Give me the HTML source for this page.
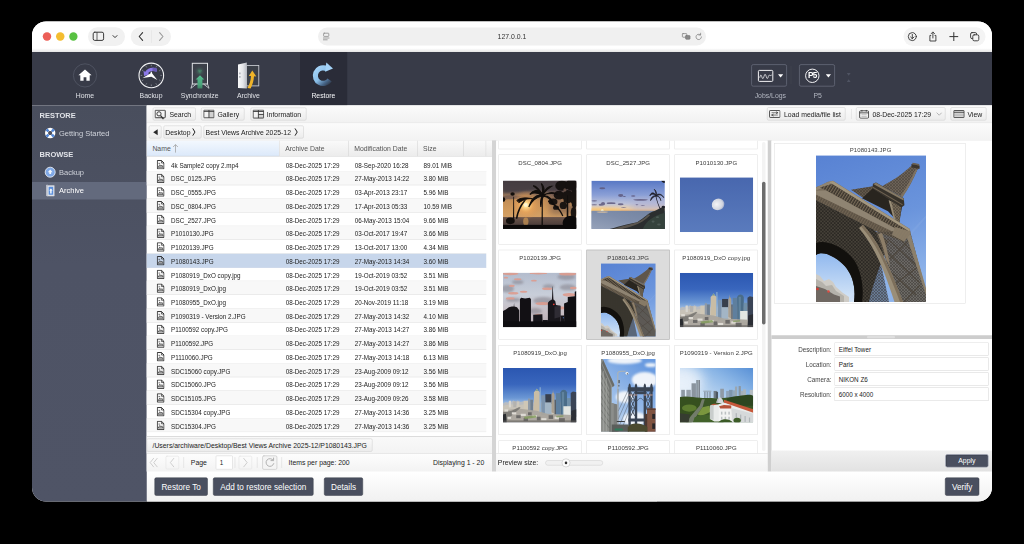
<!DOCTYPE html>
<html><head><meta charset="utf-8"><title>P5 Restore</title>
<style>
*{box-sizing:border-box;margin:0;padding:0}
html,body{width:1024px;height:544px;background:#000;overflow:hidden}
body{font-family:"Liberation Sans",sans-serif;position:relative;color:#222;-webkit-font-smoothing:antialiased}
#sc{position:absolute;left:0;top:0;width:4096px;height:2176px;transform:scale(.25);transform-origin:0 0}
#win{position:absolute;left:0;top:0;width:1024px;height:544px;zoom:4;clip-path:inset(21.5px 32px 42.5px 32px round 14px);background:#fff}
.a{position:absolute}
.t{position:absolute;white-space:nowrap;line-height:1}
#titlebar{left:32px;top:21px;width:960px;height:31px;background:linear-gradient(#fff 0,#fff 88%,#e4e4e4 100%)}
.pill{position:absolute;background:#f1f1f1;border-radius:10px}
#tb{left:32px;top:52px;width:960px;height:53.4px;background:#383b48}
#tbsel{left:300px;top:52px;width:47.3px;height:53.4px;background:#2a2c38}
.tl{position:absolute;white-space:nowrap;font-size:6.87px;line-height:8px;color:#e4e6ea;transform:translateX(-50%);top:91.6px}
#side{left:32px;top:105.4px;width:114.8px;height:400px;background:linear-gradient(#494e5d,#4e5365 40%,#4f5466)}
.sh{position:absolute;left:39.6px;font-weight:bold;font-size:7.5px;color:#e1e3e8;line-height:9px;white-space:nowrap}
.si{position:absolute;left:59px;font-size:7.5px;color:#cfd2da;line-height:9px;white-space:nowrap}
#sidesel{left:32px;top:181.9px;width:114.8px;height:17.6px;background:#636a7d}
#main{left:146.8px;top:105.4px;width:845.2px;height:366.2px;background:#fff}
#bar1{left:146.8px;top:105.4px;width:845.2px;height:17.8px;background:linear-gradient(#fbfbfb,#f1f1f1);border-bottom:.6px solid #d4d4d4}
#bar2{left:146.8px;top:123.2px;width:845.2px;height:17.3px;background:linear-gradient(#fbfbfb,#f3f3f3);border-bottom:.6px solid #d0d0d0}
.btn{position:absolute;height:13.2px;border:.7px solid #cdcdcd;border-radius:1.6px;background:linear-gradient(#fafafa,#ececec);font-size:6.87px;line-height:13px;color:#222;white-space:nowrap}
.btn span{position:absolute;top:0}
.dbtn{position:absolute;background:#4a4f5f;border-radius:1.7px;color:#fff;font-size:8.2px;text-align:center;white-space:nowrap;border:.6px solid #3c404d}
#ghead{left:146.8px;top:140.5px;width:345.2px;height:16px;background:linear-gradient(#fafafa,#ececec);border-bottom:.6px solid #d0d0d0}
.gh{position:absolute;top:140.5px;height:15.8px;border-right:.6px solid #d0d0d0;font-size:6.87px;line-height:16px;color:#555;padding-left:5.6px;white-space:nowrap}
.row{position:absolute;left:146.8px;width:339.5px;height:13.8px;border-bottom:.7px solid #dfdfdf;font-size:6.3px;line-height:15.600px;color:#222;white-space:nowrap}
.row.alt{background:#f8f8f8}
.row.sel{background:#c7d6eb;border-bottom-color:#b9c9e0}
.row span{position:absolute;top:0}
.row svg{position:absolute;left:10px;top:2.300px}
.splitv{position:absolute;background:#d3d3d3}
.thumb{position:absolute;width:83.2px;height:89.9px;border:.6px solid #dedede;background:#fff}
.thumb.sel{background:#dcdcdc;border-color:#a8a8a8}
.gl{position:absolute;white-space:nowrap;font-size:6px;letter-spacing:.08px;line-height:8px;color:#383838;transform:translateX(-50%)}
.fl{position:absolute;font-size:6.3px;line-height:8px;color:#444;white-space:nowrap;text-align:right;width:60px;left:771.4px}
.fi{position:absolute;left:834.4px;width:154.4px;height:13.3px;border:.6px solid #d4d4d4;background:#fff;font-size:6.3px;line-height:13.2px;padding-left:3.800px;color:#222;white-space:nowrap}
</style></head>
<body>

<svg width="0" height="0" style="position:absolute">
<defs>
<linearGradient id="gEs" x1="0" y1="0" x2=".25" y2="1"><stop offset="0" stop-color="#5882d3"/><stop offset=".55" stop-color="#6a94dc"/><stop offset="1" stop-color="#8fb4ea"/></linearGradient>
<linearGradient id="gEa" x1="0" y1="0" x2="0" y2="1"><stop offset="0" stop-color="#8db6ee"/><stop offset="1" stop-color="#d9e8f8"/></linearGradient>
<pattern id="lat" width="3" height="3" patternUnits="userSpaceOnUse"><path d="M0 0L3 3M3 0L0 3" stroke="#2a241d" stroke-width=".55" opacity=".65"/></pattern>
<pattern id="teeth" width="2.600" height="8" patternUnits="userSpaceOnUse" patternTransform="rotate(32)"><rect width="1.200" height="8" fill="#8c7d67" opacity=".75"/></pattern>
<pattern id="latd" width="3.400" height="3.400" patternUnits="userSpaceOnUse"><path d="M0 0L3.400 3.400M3.400 0L0 3.400" stroke="#5a5348" stroke-width=".6" opacity=".8"/></pattern>
<pattern id="lat2" width="2.2" height="2.2" patternUnits="userSpaceOnUse"><path d="M0 0L2.2 2.2M2.2 0L0 2.2" stroke="#0f0e0d" stroke-width=".5" opacity=".6"/></pattern>
<linearGradient id="gS1" x1="0" y1="0" x2="0" y2="1"><stop offset="0" stop-color="#423c42"/><stop offset=".2" stop-color="#6b5a56"/><stop offset=".42" stop-color="#c48f57"/><stop offset=".6" stop-color="#d09a5c"/><stop offset=".755" stop-color="#d3a066"/><stop offset=".765" stop-color="#6a544a"/><stop offset="1" stop-color="#3d3232"/></linearGradient>
<radialGradient id="gSun" cx=".5" cy=".5" r=".5"><stop offset="0" stop-color="#fff3c0"/><stop offset=".18" stop-color="#ffd98a"/><stop offset=".5" stop-color="#f0a85a" stop-opacity=".6"/><stop offset="1" stop-color="#d89050" stop-opacity="0"/></radialGradient>
<linearGradient id="gS2" x1="0" y1="0" x2="0" y2="1"><stop offset="0" stop-color="#5777c4"/><stop offset=".3" stop-color="#8a9fd6"/><stop offset=".48" stop-color="#bec3d9"/><stop offset=".57" stop-color="#e8cfae"/><stop offset=".62" stop-color="#efb97a"/><stop offset=".63" stop-color="#7f8fae"/></linearGradient>
<linearGradient id="gSea" x1="1" y1="0" x2="0" y2="1"><stop offset="0" stop-color="#72829f"/><stop offset=".5" stop-color="#7e8daa"/><stop offset="1" stop-color="#96a2b9"/></linearGradient>
<linearGradient id="gM" x1="0" y1="0" x2="0" y2="1"><stop offset="0" stop-color="#4867ae"/><stop offset="1" stop-color="#5a7bbd"/></linearGradient>
<radialGradient id="gMoon" cx=".4" cy=".45" r=".65"><stop offset="0" stop-color="#f4f4f6"/><stop offset=".7" stop-color="#d2d6e0"/><stop offset="1" stop-color="#8c9cc4"/></radialGradient>
<linearGradient id="gD" x1="0" y1="0" x2="0" y2="1"><stop offset="0" stop-color="#b3bccd"/><stop offset=".4" stop-color="#c8ced9"/><stop offset=".75" stop-color="#c6bcc2"/><stop offset="1" stop-color="#b5a9b0"/></linearGradient>
<filter id="bl1" x="-20%" y="-20%" width="140%" height="140%"><feGaussianBlur stdDeviation="1.1"/></filter>
<filter id="bl3" x="-30%" y="-30%" width="160%" height="160%"><feGaussianBlur stdDeviation="4"/></filter>
<filter id="bl4" x="-50%" y="-50%" width="200%" height="200%"><feGaussianBlur stdDeviation="8"/></filter>
<filter id="bl2" x="-20%" y="-20%" width="140%" height="140%"><feGaussianBlur stdDeviation=".6"/></filter>
<linearGradient id="gN" x1="0" y1="0" x2="0" y2="1"><stop offset="0" stop-color="#2b57b1"/><stop offset=".3" stop-color="#3966bd"/><stop offset=".55" stop-color="#6b97d4"/><stop offset=".66" stop-color="#a3c0e4"/></linearGradient>
<linearGradient id="gB" x1="0" y1="1" x2=".6" y2="0"><stop offset="0" stop-color="#cfe0f4"/><stop offset=".45" stop-color="#9fc0ea"/><stop offset="1" stop-color="#6a9be0"/></linearGradient>
<linearGradient id="gG" x1=".2" y1="1" x2="1" y2="0"><stop offset="0" stop-color="#e4eef8"/><stop offset=".35" stop-color="#c3daf2"/><stop offset=".7" stop-color="#8bb6e6"/><stop offset="1" stop-color="#5890d6"/></linearGradient>

<symbol id="pEiffel" viewBox="0 0 110 147" preserveAspectRatio="none">
<rect width="110" height="147" fill="url(#gEs)"/>
<path d="M0 96H46V147H0Z" fill="url(#gEa)"/>
<path d="M70 96L110 118V147H56Z" fill="#8fb5ea" opacity=".55"/>
<path d="M30 147L110 60V63L35 147Z" fill="#a9c8f0" opacity=".12"/>
<!-- spire -->
<path d="M96.400 9.600L97 8L103 9.200L103.500 13L101.300 14.600C96.500 26 91.500 34.500 86.500 42L66 31C78 25 89 17 96.400 9.600Z" fill="#6f655a"/>
<path d="M96.400 9.600L97 8L103 9.200L103.500 13L101.300 14.600C96.500 26 91.500 34.500 86.500 42L66 31C78 25 89 17 96.400 9.600Z" fill="url(#lat)"/>
<path d="M101.300 14.600C96.500 26 91.500 34.500 86.500 42L84.500 41C90 33 95 24 99.600 14Z" fill="#877b69" opacity=".8"/>
<path d="M95.400 8.800L103.600 10.400L103.400 13.600L95.800 12.200Z" fill="#3b352e"/>
<path d="M96.600 7.600L103.200 8.800L103.400 10.200L96.200 9Z" fill="#6c6154"/>
<!-- left lattice by 2nd platform -->
<path d="M35 34.500L57 31L57 34.500L47 42.500Z" fill="#63594c"/><path d="M35 34.500L57 31L57 34.500L47 42.500Z" fill="url(#lat)"/>
<!-- underside of 2nd platform -->
<path d="M46 43L57 33L86 52L83 68L72 56Z" fill="#29251f"/>
<path d="M73 45L85.500 50.500L83.500 68L79.500 65Z" fill="#786c5a"/><path d="M73 45L85.500 50.500L83.500 68L79.500 65Z" fill="url(#lat)"/>
<path d="M72.600 45L75 46L79.600 65L77.600 63.600Z" fill="#988c76"/>
<!-- 2nd platform -->
<path d="M57 28.600L60 27.400L87.800 43.200L88.400 50L85.400 52.400L56.400 33.400Z" fill="#37322b"/>
<path d="M57.200 28.800L60 27.600L87.800 43.400L87.600 45.400Z" fill="#857966"/>
<path d="M56.600 31.400L86.600 49L86.400 50.200L56.500 32.600Z" fill="#7a6d5a" opacity=".8"/>
<!-- 1st platform -->
<path d="M0 32L6 29.500L12 26.500L17 25.600L94 74L94.400 79L88 86.500L57 75L0 45Z" fill="#7b6f5e"/>
<path d="M12 26.800L17 25.800L94 74.200L93.400 76.400L16 28.600Z" fill="#a3977f"/>
<path d="M0 32.200L12 26.800L16 28.600L0 35.400Z" fill="#908573"/>
<path d="M4 32.200L16 28.800L93.300 76.600L92 80.200L10 35Z" fill="#39332b"/>
<path d="M4 32.200L16 28.800L93.300 76.600L92 80.200L10 35Z" fill="url(#teeth)"/>
<path d="M0 35.600L10 35.200L92 80.400L90.400 83.200L0 39.600Z" fill="#8f8472"/>
<path d="M0 39.600L90.400 83.300L88 86.500L57 75L0 45.500Z" fill="#5a5043"/><path d="M0 39.600L90.400 83.300L88 86.500L57 75L0 45.500Z" fill="url(#teeth)" opacity=".6"/>
<!-- dark under platform -->
<path d="M0 45L57 74.500L72 86L68 100C62 115 57 130 53 147L38 147C40.500 130 36 109 11 99C6 97.600 2 98.400 0 100Z" fill="#2b2823"/>
<path d="M0 45L57 74.500L72 86L68 100C62 115 57 130 53 147L38 147C40.500 130 36 109 11 99C6 97.600 2 98.400 0 100Z" fill="url(#latd)"/>
<path d="M0 88C10 84 30 92 40 108C46 120 48 135 46 147L38 147C40.500 130 36 109 11 99C6 97.600 2 98.400 0 100Z" fill="#12100d"/>
<path d="M53 147L64 104L73 147Z" fill="#3b362f" opacity=".45"/><path d="M53 147L64 104L73 147Z" fill="url(#lat)"/>
<!-- right leg lattice -->
<path d="M60 77L94 76L110 136V147H84L68 100Z" fill="#675d50" opacity=".86"/>
<path d="M60 77L94 76L110 136V147H84L68 100Z" fill="url(#lat)"/>
<path d="M72 84L100 110M70 96L104 128M80 80L96 96M76 118L100 140M88 147L104 130M74 104L92 86M80 128L102 112" stroke="#4a4238" stroke-width="1.200" opacity=".8" fill="none"/>
<path d="M90 79.500L94 77.500L110 133V140Z" fill="#8c806c"/>
<path d="M79 72L94 76.200L94.400 79L88 86.500L76 80Z" fill="#857966"/>
<path d="M79 72L94 76.200L94.400 79L88 86.500L76 80Z" fill="url(#teeth)" opacity=".7"/>
<!-- lit beams -->
<path d="M47 70C60 84 69 100 87 147L78.500 147C67 112 59 93 43 73Z" fill="#9a8e78"/>
<path d="M47 70C60 84 69 100 87 147L84 147C67 102 58 86 45 71.500Z" fill="#7d6f5b"/>
<path d="M66 78C72 95 73 105 74 112L70 104C68 95 65 86 62 79Z" fill="#8d7e68"/>
<!-- buildings -->
<path d="M0 119L4 121L8 126L13 124L17 127L20 132L27 138L33 142V147H0Z" fill="#cfccc6"/>
<path d="M0 124L6 127L10 131L16 130L20 136L28 141V147H0Z" fill="#a9a6a0" opacity=".7"/>
<path d="M0 131L9 134L18 139.500L24 141.500V147H0Z" fill="#6f6862"/>
<circle cx="1.500" cy="134" r="1.300" fill="#d23a30"/><circle cx="12.500" cy="136.500" r="1.200" fill="#e04a40"/>
</symbol>

<symbol id="pPalms" viewBox="0 0 100 66" preserveAspectRatio="none">
<rect width="100" height="66" fill="url(#gS1)"/>
<rect x="64" y="-6" width="46" height="52" fill="#5c4a4c" opacity=".5" filter="url(#bl3)"/>
<path d="M0 0H100V13C84 10 70 17 52 14C34 11 16 19 0 16Z" fill="#443c42" opacity=".9" filter="url(#bl1)"/>
<path d="M0 21C12 18 24 23 40 21L38 25C26 27 12 23 0 27Z" fill="#5e4e50" opacity=".55" filter="url(#bl2)"/>
<circle cx="31" cy="33.300" r="20" fill="url(#gSun)"/><circle cx="31" cy="33.300" r="2.600" fill="#fff6d0" filter="url(#bl2)"/>
<ellipse cx="31" cy="56" rx="3.600" ry="5.500" fill="#e0a458" opacity=".6" filter="url(#bl2)"/>
<rect y="60.500" width="100" height="5.500" fill="#0c0a0a"/>
<g fill="#130f0d" stroke="#130f0d" stroke-linecap="round">
<!-- main palm -->
<path d="M52.300 62L52.800 18L54 18L54.200 62Z" stroke="none"/>
<path d="M53.300 18C47 11 41 13 36.500 19C42 15.500 48 17 53 20C46 19 39 24 35 36C40 27 47 22 53.300 21.500C51 26 50.500 31 51.500 36C52 30 53 25 54.500 22C60 20 66 23 69 33C65 25 60 22 55 21C61 16 68 15 74 19C67 16.500 61 17.500 55 19.500C57 13 56 8 52 4C54.500 9 54 14 53.300 18Z" stroke-width="1.600"/>
<path d="M53 19C49 11 45 8 41 7C46 10 50 14 53 19Z" stroke-width="1.600"/>
<path d="M54 19C58 11 62 8 66 8C61 11 57 15 54 19Z" stroke-width="1.600"/>
<!-- leaning tree -->
<path d="M17.500 52C19 42 23 33 30 26L31 26.800C25 34 21 43 19.500 52Z" stroke="none"/>
<path d="M19 27C24 23 32 23 40 25C34 24 28 26 22 30Z" stroke-width="1.200"/>
<!-- far-left tree -->
<path d="M13.600 52L14 22L15 22L15.200 52Z" stroke="none"/>
<ellipse cx="13" cy="18.500" rx="3" ry="2.400" stroke="none"/><ellipse cx="1" cy="26" rx="2" ry="3" stroke="none"/>
<ellipse cx="10" cy="55" rx="6" ry="4.500" stroke="none"/>
<!-- right trees -->
<path d="M86.300 62L87 20L88.400 20L89 62Z" stroke="none"/>
<path d="M62 27C70 31 78 38 82 48L80.500 48.600C76 39 69 33 61 29Z" stroke="none"/>
</g>
<g fill="#120e0d" opacity=".93"><ellipse cx="80" cy="7" rx="9" ry="7"/><ellipse cx="93" cy="6" rx="8" ry="8"/><ellipse cx="76" cy="20" rx="7" ry="6"/><ellipse cx="88" cy="22" rx="8" ry="9"/><ellipse cx="97" cy="24" rx="5" ry="14"/><ellipse cx="68" cy="29" rx="6" ry="4.500"/><ellipse cx="82" cy="34" rx="5" ry="5"/><ellipse cx="96" cy="44" rx="4" ry="8"/><ellipse cx="72" cy="37" rx="4" ry="3"/></g>
<ellipse cx="92" cy="58" rx="11" ry="10" fill="#0c0a0a"/>
<ellipse cx="84" cy="13" rx="2" ry="2.500" fill="#7a5e50" opacity=".7"/><ellipse cx="92" cy="33" rx="1.600" ry="2.500" fill="#b98a58" opacity=".7"/><ellipse cx="81" cy="27" rx="1.500" ry="2" fill="#a87c54" opacity=".7"/>
</symbol>

<symbol id="pBeach" viewBox="0 0 100 66" preserveAspectRatio="none">
<rect width="100" height="66" fill="url(#gS2)"/>
<rect x="55" y="26" width="50" height="16" fill="#aeaed2" opacity=".55" filter="url(#bl3)"/>
<ellipse cx="15" cy="41" rx="26" ry="4" fill="#f8c878" opacity=".8" filter="url(#bl1)"/>
<circle cx="15" cy="41" r="1.800" fill="#fff6cc"/>
<rect y="41.300" width="100" height="24.700" fill="url(#gSea)"/>
<ellipse cx="15" cy="43" rx="8" ry="1.200" fill="#e8c8a0" opacity=".6"/>
<g fill="#5f5a7e" opacity=".85" filter="url(#bl2)"><ellipse cx="15.0" cy="10.6" rx="4.0" ry="1.3"/><ellipse cx="40.0" cy="20.5" rx="3.5" ry="2.0"/><ellipse cx="57.0" cy="21.1" rx="3.0" ry="1.0"/><ellipse cx="67.0" cy="26.4" rx="10.0" ry="1.1"/><ellipse cx="4.0" cy="27.7" rx="4.0" ry="0.9"/><ellipse cx="4.0" cy="33.0" rx="4.0" ry="0.7"/><ellipse cx="16.0" cy="31.7" rx="2.8" ry="2.3"/><ellipse cx="27.0" cy="31.0" rx="6.0" ry="1.2"/><ellipse cx="40.0" cy="32.3" rx="4.0" ry="1.3"/><ellipse cx="44.0" cy="36.6" rx="4.0" ry="0.6"/><ellipse cx="62.0" cy="33.0" rx="2.0" ry="0.6"/><ellipse cx="70.0" cy="34.3" rx="3.0" ry="0.6"/><ellipse cx="45.0" cy="21.8" rx="2.0" ry="0.7"/><ellipse cx="13.0" cy="33.0" rx="3.0" ry="1.3"/></g>
<path d="M25 66C40 62 55 58 62.500 56.800C70 52 76 47 78 45.500C82 43 86 41.500 87.500 41C92 38 96 36 100 35V66Z" fill="#2b2e2f"/>
<path d="M30 66C44 62 56 59 63 57C70 53 75 49 78 46L80 47.500C74 54 66 59 56 62C50 64 46 65 42 66Z" fill="#5f5a52" opacity=".9"/>
<path d="M70 66C74 56 84 48 100 44V66Z" fill="#35423c"/>
<g fill="#5d6a66" opacity=".6"><ellipse cx="84" cy="56" rx="2" ry="1.500"/><ellipse cx="92" cy="60" rx="2.500" ry="1.500"/><ellipse cx="90" cy="50" rx="2" ry="1.200"/></g>
<g fill="#23232e" stroke="#23232e" stroke-linecap="round"><path d="M93.600 40C91 34 88.500 28 87.200 20.500L88.200 20.300C89.600 28 92 34 94.800 39.600Z" stroke="none"/>
<path d="M87.600 19.500C84 15 81 16.500 79.500 21C82 18 85 18 87.500 20.500C83.500 20.500 81 23.500 80.500 27.500C83 23.500 85.500 21.500 88 21.500C91.500 21 94 23.500 94.500 27.500C94 23.500 92 21 89 20.300C93 18.500 96.500 20 98.500 23.500C96.500 19 92.500 17.500 88.600 19.300C89 16 87.500 13 85.500 12C87.500 14.500 88 17 87.600 19.500Z" stroke-width=".9"/></g>
<path d="M95 0H100V3.500C97.500 3.500 95.800 2 95 0Z" fill="#1b1b20"/>
<ellipse cx="98" cy="36" rx="2.400" ry="1.600" fill="#20222a"/>
</symbol>

<symbol id="pMoon" viewBox="0 0 120 90" preserveAspectRatio="none">
<rect width="120" height="90" fill="url(#gM)"/>
<ellipse cx="62.5" cy="44.5" rx="10.5" ry="9.4" fill="url(#gMoon)" transform="rotate(-20 62.5 44.5)"/>
</symbol>

<symbol id="pDusk" viewBox="0 0 100 74" preserveAspectRatio="none">
<rect width="100" height="74" fill="url(#gD)"/>
<g fill="#87858f" opacity=".6" filter="url(#bl1)"><ellipse cx="6" cy="22" rx="9" ry="5"/><ellipse cx="20" cy="13" rx="8" ry="3"/><ellipse cx="62" cy="19" rx="8" ry="3"/><ellipse cx="88" cy="20" rx="11" ry="4"/><ellipse cx="86" cy="6" rx="12" ry="4"/><ellipse cx="55" cy="38" rx="14" ry="5"/><ellipse cx="14" cy="37" rx="10" ry="3"/><ellipse cx="44" cy="52" rx="9" ry="4"/></g>
<g fill="#dd9c8e" opacity=".9" filter="url(#bl2)"><ellipse cx="10" cy="1.600" rx="11" ry="2"/><ellipse cx="48" cy="1.200" rx="12" ry="1.400"/><ellipse cx="88" cy="2" rx="12" ry="2.200"/><ellipse cx="20" cy="9" rx="5" ry="1.400"/><ellipse cx="12" cy="18" rx="4" ry="1.600"/><ellipse cx="14" cy="28" rx="7" ry="1.800"/><ellipse cx="28" cy="26" rx="5" ry="1.400"/><ellipse cx="60" cy="22" rx="7" ry="1.800"/><ellipse cx="90" cy="30" rx="9" ry="2.400"/><ellipse cx="96" cy="21" rx="5" ry="1.600"/><ellipse cx="10" cy="35" rx="6" ry="1.600"/><ellipse cx="54" cy="42" rx="10" ry="2"/><ellipse cx="48" cy="58" rx="5" ry="2.400"/><ellipse cx="42" cy="11" rx="4" ry="1.200"/><ellipse cx="4" cy="7" rx="3" ry="1.200"/><ellipse cx="80" cy="48" rx="4" ry="2"/></g>
<path d="M0 52L4 50L8 47L12 46L14.600 46L15 41L15.400 46L19 47L22 51V74H0Z" fill="#131115"/>
<path d="M23 36L24.500 34L30 35L36.500 34L38 36V74H23Z" fill="#121014"/>
<path d="M41 57L53.500 56.500L54 74H41Z" fill="#17151a"/>
<path d="M61 74V41L63 38.500L66.500 36.500L67.300 19L67.700 19L68.500 36.500L71 38.500L72 44L78 45V74Z" fill="#18161b"/>
<path d="M70 46L78 45V60L70 62Z" fill="#2f2c34"/>
<path d="M54 64H61V74H54ZM78 58H83V74H78Z" fill="#16141a"/>
<path d="M83 42L88 40V33L97.500 32V26L100 25V74H83Z" fill="#100f12"/>
<rect y="66" width="100" height="8" fill="#0e0d10"/>
<circle cx="69" cy="43" r="1.200" fill="#e23a34"/><circle cx="82" cy="61" r=".7" fill="#5a8fe0"/>
</symbol>

<symbol id="pNYC" viewBox="0 0 100 74" preserveAspectRatio="none">
<rect width="100" height="74" fill="url(#gN)"/>
<path d="M0 48L4 46L6 47L9 45L11 46L14 44L17 46L20 44L24 46L28 45L30 47L34 44L38 46L42 47L100 46V74H0Z" fill="#b9bcc0"/>
<path d="M0 51L10 49L20 50L30 49L42 51L46 56L100 56V74H0Z" fill="#c8c3b8"/>
<rect x="8.0" y="44.4" width="3.0" height="8.9" fill="#d8d6d0"/>
<rect x="14.0" y="45.1" width="4.0" height="8.1" fill="#b4b2ae"/>
<rect x="19.0" y="45.9" width="3.0" height="8.9" fill="#cdc8bc"/>
<rect x="28.0" y="44.4" width="6.0" height="16.3" fill="#cfc7b6"/>
<rect x="34.0" y="41.4" width="3.0" height="17.8" fill="#8f9aa6"/>
<rect x="37.0" y="42.9" width="4.0" height="17.8" fill="#6f7f90"/>
<path d="M42 58V33L44 31L45.800 28.200L46.200 28.200L48 31L50 33V58Z" fill="#c9bda5"/>
<path d="M44 31L46 28.400L48 31Z" fill="#6f9a88"/>
<path d="M49.800 26H51.200L51.600 60H49.600Z" fill="#8fb0d2"/>
<rect x="52.0" y="37.0" width="5.0" height="26.6" fill="#7d94ad"/>
<rect x="57.5" y="35.5" width="8.5" height="13.3" fill="#383f4c"/>
<rect x="57.0" y="46.6" width="9.0" height="18.5" fill="#a3b5c5"/>
<path d="M66 60V36L67.600 33L68 29L68.400 33L70 36V62Z" fill="#a99f90"/>
<rect x="70.0" y="42.9" width="2.0" height="20.7" fill="#5a6068"/>
<rect x="72.0" y="34.0" width="6.0" height="29.6" fill="#5f7f9e"/>
<path d="M78 64V33C80 28.500 85 28.500 87 33V64Z" fill="#4a6c88"/>
<rect x="80.0" y="32.6" width="3.0" height="31.1" fill="#6f93ae" opacity=".6"/>
<rect x="87.0" y="40.7" width="5.0" height="22.9" fill="#6f8fa8"/>
<path d="M92 66V34L95 32L100 33V66Z" fill="#3a4456"/>
<rect x="82.0" y="51.8" width="10.0" height="14.8" fill="#e2e6e2"/>
<path d="M0 58L20 55L46 58L60 62L100 64V74H0Z" fill="#a9a59c" opacity=".92"/>
<path d="M0 60L12 58L22 53L24 54L10 66L4 72H0Z" fill="#6f6d6a" opacity=".75"/>
<g fill="#dedbd4"><rect x="2" y="56" width="5" height="3"/><rect x="12" y="60" width="6" height="3"/><rect x="24" y="62" width="7" height="3"/><rect x="40" y="64" width="6" height="3"/><rect x="6" y="66" width="5" height="3"/><rect x="52" y="68" width="7" height="3"/><rect x="70" y="66" width="6" height="3"/></g>
<g fill="#6c6a68"><rect x="18" y="64" width="6" height="4"/><rect x="34" y="60" width="5" height="4"/><rect x="46" y="66" width="5" height="5"/><rect x="62" y="64" width="6" height="5"/><rect x="76" y="68" width="8" height="5"/><rect x="28" y="68" width="6" height="4"/></g>
<path d="M28 66L44 64L46 67L30 69Z" fill="#7f9a58" opacity=".8"/><path d="M72 65L82 64L82 66L73 67Z" fill="#7f9a58" opacity=".7"/>
<path d="M0 63L4 62L5 74H0Z" fill="#2a2c30"/><path d="M93 58L100 56V74H92Z" fill="#2b2e35"/>
<rect y="71" width="100" height="3" fill="#5f5e5c" opacity=".6"/>
</symbol>

<symbol id="pBridge" viewBox="0 0 55 73" preserveAspectRatio="none">
<rect width="55" height="73" fill="url(#gB)"/>
<g fill="#f6f8fb" opacity=".95" filter="url(#bl1)"><ellipse cx="24" cy="1.500" rx="17" ry="3.600"/><ellipse cx="44" cy="21" rx="13" ry="8"/><ellipse cx="24" cy="38" rx="9" ry="6"/><ellipse cx="34" cy="60" rx="12" ry="7"/><ellipse cx="50" cy="6" rx="6" ry="2"/></g>
<!-- left building -->
<path d="M0 0H2L12.600 24.500V27.500L11 28.500V73H0Z" fill="#8d8f8b"/>
<path d="M0 3L10 27V73H8.500V29L0 9Z" fill="#70726f"/>
<path d="M2.400 1L13.800 26.300L12 28L1.200 4Z" fill="#6a6c69"/>
<g stroke="#5f615f" stroke-width=".7" opacity=".7"><path d="M0 16L8.500 33M0 23L8.500 39M0 30L8.500 45M0 37L8.500 51M0 44L8.500 57M0 51L8.500 63M0 58L8.500 69"/></g>
<g stroke="#b3b5b0" stroke-width=".6" opacity=".8"><path d="M2.800 12V73M5.600 19V73"/></g>
<path d="M10.500 44L17 45.500V73H10.500Z" fill="#7c7e7c"/><path d="M10.500 44L13 44.600V73H10.500Z" fill="#8c8e8b"/>
<!-- cables -->
<g stroke="#56606c" stroke-width=".5" fill="none"><path d="M28.500 29L17.500 52M28.500 35L17.500 60M28.500 43L18 68M28.500 51L21 70"/></g>
<!-- bridge tower -->
<g fill="#394352"><path d="M27.600 67V27L28.200 25L28.800 24.500L29.400 25L30 27V67ZM34 67V27L34.600 25L35.200 24.500L35.800 25L36.400 27V67ZM42.800 67V27L43.400 25L44 24.500L44.600 25L45.200 27V67ZM49.400 67V27L50 25L50.600 24.500L51.200 25L51.800 27V67Z"/>
<path d="M27 28.400H52.400V32.600H27ZM27.600 59.500H51.800V62.500H27.600Z"/><path d="M36 32.600H43.200V35C41 35.500 38.200 35.500 36 35Z"/></g>
<path d="M27.600 36H36.400M42.800 36H51.800" stroke="#c09a90" stroke-width="1"/>
<g stroke="#3f4958" stroke-width=".9" fill="none"><path d="M30 33L34 41L30 49L34 57M34 33L30 41L34 49L30 57M45.200 33L49.400 41L45.200 49L49.400 57M49.400 33L45.200 41L49.400 49L45.200 57"/><path d="M30 41H34M30 49H34M45.200 41H49.400M45.200 49H49.400"/></g>
<path d="M36.400 42C38.500 38.500 40.700 38.500 42.800 42" stroke="#465060" stroke-width=".7" fill="none"/>
<!-- lamp post -->
<path d="M17 73V14.500C17 12.800 18.500 12.300 20.500 12.300H24.800" stroke="#aeb2b2" stroke-width="1.100" fill="none"/>
<path d="M17.400 73V30" stroke="#7e8282" stroke-width=".5"/>
<circle cx="26.200" cy="14.200" r="1.500" fill="#e8eaea"/><circle cx="26.600" cy="14.800" r=".6" fill="#444"/>
<rect x="17.600" y="21" width="1.400" height="3.200" fill="#5a5e60"/><rect x="17.600" y="26" width="1" height="1.600" fill="#5a5e60"/>
<!-- brick building -->
<path d="M46.200 49.600H55V73H46.200Z" fill="#7f5341"/><path d="M46.200 49.600H55V51H46.200Z" fill="#5f3e32"/>
<path d="M44 55H46.400V73H44Z" fill="#4c3830"/>
<rect x="51.400" y="55" width="2.800" height="5" fill="#2a2729"/><rect x="51.400" y="64.500" width="2.800" height="5.500" fill="#2a2729"/>
<!-- bottom -->
<path d="M11 65.500H28V73H11Z" fill="#5b5e5b"/>
<path d="M27 68C30 63.500 40 63.500 46.500 68V73H27Z" fill="#4b4a2f"/>
<rect x="14" y="69.600" width="8" height="2" fill="#2f7a5a"/>
<path d="M16 62H24V63H16Z" fill="#3a3d40"/>
</symbol>

<symbol id="pSing" viewBox="0 0 100 75" preserveAspectRatio="none">
<rect width="100" height="75" fill="url(#gG)"/>
<ellipse cx="2" cy="18" rx="30" ry="22" fill="#f4f8fc" opacity=".75" filter="url(#bl4)"/>
<rect x="2.0" y="30.0" width="5.0" height="12.0" fill="#8e99a4"/>
<rect x="9.0" y="30.0" width="6.0" height="12.0" fill="#95a0aa"/>
<rect x="16.0" y="21.0" width="6.0" height="21.0" fill="#8a949e"/>
<rect x="22.5" y="16.5" width="5.0" height="25.5" fill="#7b8690"/>
<rect x="24.0" y="16.5" width="2.2" height="25.5" fill="#a8b2ba" opacity=".7"/>
<rect x="33.0" y="32.2" width="2.2" height="9.0" fill="#8d9db0"/>
<rect x="36.5" y="32.2" width="2.2" height="9.0" fill="#8d9db0"/>
<rect x="40.0" y="32.2" width="2.2" height="9.0" fill="#8d9db0"/>
<rect x="32.0" y="31.1" width="11.0" height="1.5" fill="#9aa8b8"/>
<rect x="46.0" y="31.5" width="5.0" height="10.5" fill="#6f7a84"/>
<rect x="49.0" y="33.0" width="3.0" height="9.0" fill="#4c5660"/>
<rect x="55.0" y="28.5" width="5.0" height="13.5" fill="#8f9aa6"/>
<rect x="63.0" y="31.5" width="4.0" height="10.5" fill="#8fa3b8"/>
<rect x="67.0" y="30.0" width="5.0" height="12.0" fill="#7f95ac"/>
<rect x="72.0" y="30.7" width="3.0" height="11.3" fill="#93a7ba"/>
<rect x="75.0" y="25.5" width="3.0" height="16.5" fill="#9aa6b0"/>
<rect x="80.0" y="24.8" width="3.0" height="17.3" fill="#8a96a2"/>
<rect x="83.0" y="31.5" width="3.0" height="10.5" fill="#a3b0bc"/>
<rect x="86.0" y="29.2" width="4.0" height="12.8" fill="#aab4bc"/>
<rect x="95.0" y="30.0" width="5.0" height="12.0" fill="#b4bcc2"/>
<path d="M0 40C8 38 18 40 28 41C36 42 44 40 52 42C62 40 70 41 78 39C86 37 94 38 100 40V75H0Z" fill="#3a5526"/>
<path d="M64 42C72 38 82 39 90 37C94 36 98 37 100 38V52H66Z" fill="#2d4620"/>
<path d="M0 41C10 39 22 41 31 43L27 56L16 75H0Z" fill="#36501f"/>
<ellipse cx="13" cy="55" rx="10" ry="5" fill="#5d7c30"/>
<path d="M30 43L34 43L31 54L24 64L18 75H8L20 60L27 52Z" fill="#727c6a"/>
<path d="M31 54L40 52L42 60L30 66L24 64Z" fill="#7a963e"/>
<path d="M0 62L14 64L12 75H0Z" fill="#363c30"/>
<path d="M20 68C30 62 44 64 52 70L60 75H18Z" fill="#42622a"/>
<path d="M41 52L46 50L52 50L60 47L100 58V75H72L70 73.500H47L41 70Z" fill="#e9ebea"/>
<path d="M41 52L46 50V71L41 70Z" fill="#c9cdcc"/>
<path d="M50 48C50 42.500 53 40.500 54.500 40.500C56 40.500 59 42.500 59.500 48Z" fill="#d5d9dc"/><path d="M50 48C50 44 52 41.500 54 40.800C52.500 43 52 45.500 52.400 48Z" fill="#b4b9be"/>
<path d="M60 43.500L100 56.500V61.500L60 47.500Z" fill="#c6583a"/>
<path d="M42 49.800L47 49L52 49.500L46 51Z" fill="#b9563a"/>
<rect x="53.0" y="54.0" width="17.0" height="19.5" fill="#f2f3f2"/>
<path d="M53.500 52.500L60 50.800L70 51.500L70 55.500L55 55.500Z" fill="#b5533a"/>
<path d="M70 55L100 63V75H72Z" fill="#d6d9da"/>
<g fill="#8f979c" opacity=".55"><rect x="56" y="60" width="2" height="4"/><rect x="61" y="60" width="2" height="4"/><rect x="66" y="60" width="2" height="4"/><rect x="56" y="67" width="2" height="4"/><rect x="61" y="67" width="2" height="4"/><rect x="66" y="67" width="2" height="4"/><rect x="76" y="62" width="1.600" height="9"/><rect x="82" y="64" width="1.600" height="9"/><rect x="88" y="66" width="1.600" height="8"/><rect x="94" y="68" width="1.600" height="7"/></g>
<path d="M54 73C60 69 68 70 72 75H52Z" fill="#3b5a26"/><ellipse cx="78" cy="72" rx="5" ry="3.500" fill="#3d5c28"/>
</symbol>
</defs></svg>

<div id="sc"><div id="win">
<div id=titlebar class="a" style=""></div>
<div class="a" style="left:42.8px;top:32.3px;width:8.4px;height:8.4px;border-radius:50%;background:#ec5f57"></div>
<div class="a" style="left:56.0px;top:32.3px;width:8.4px;height:8.4px;border-radius:50%;background:#f4bd30"></div>
<div class="a" style="left:69.2px;top:32.3px;width:8.4px;height:8.4px;border-radius:50%;background:#58c142"></div>
<div class="pill" style="left:88px;top:27.3px;width:37px;height:18.6px"></div>
<div class="pill" style="left:130.8px;top:27.3px;width:40.2px;height:18.6px"></div>
<div class="pill" style="left:318px;top:27.5px;width:388px;height:18px;background:#f0f0f0"></div>
<div class="pill" style="left:903.4px;top:27.3px;width:82px;height:18.6px;background:#f4f4f4"></div>
<svg class="a" style="left:32px;top:21px" width="960" height="31" viewBox="32 21 960 31" fill="none" stroke="#444" stroke-width="1" stroke-linecap="round" stroke-linejoin="round">
<rect x="93.2" y="32.2" width="10.4" height="8.2" rx="1.6" stroke="#3a3a3a" stroke-width="1"/><path d="M97 32.4V40.2" stroke="#3a3a3a" stroke-width=".8"/>
<path d="M113 35.6l2 2 2-2" stroke="#333" stroke-width="1"/>
<path d="M142.6 32.6l-3.4 3.9 3.4 3.9" stroke="#333" stroke-width="1.1"/>
<path d="M159.6 32.6l3.4 3.9-3.4 3.9" stroke="#9a9a9a" stroke-width="1.1"/>
<path d="M151.5 30.5v12" stroke="#e2e2e2" stroke-width=".6"/>
<g stroke="#8a8a8a" stroke-width=".8"><rect x="323.600" y="33.200" width="5.200" height="3.200" rx=".6"/><path d="M323.400 38h5.600M323.400 39.800h3.800"/></g>
<g stroke="#7a7a7a" stroke-width=".7"><rect x="682.4" y="33.6" width="4.4" height="3.6" rx=".6"/><rect x="685.6" y="35.6" width="4.4" height="3.6" rx=".6" fill="#8a8a8a"/></g>
<path d="M701.4 36.9a2.7 2.7 0 1 1-1-2.1M700.6 33.2v1.8h-1.8" stroke="#7a7a7a" stroke-width=".7"/>
<circle cx="912.3" cy="36.6" r="4" stroke="#333" stroke-width=".9"/><path d="M912.3 34.4v4.2M910.6 37l1.7 1.7 1.7-1.7" stroke="#333" stroke-width=".9"/>
<path d="M930.8 35.4h-.9v5.6h6v-5.6h-.9M932.9 33.2v4.8M931.3 33.6l1.6-1.7 1.6 1.7" stroke="#333" stroke-width=".9"/>
<path d="M949.8 36.6h8M953.8 32.6v8" stroke="#333" stroke-width="1"/>
<rect x="970.6" y="32.6" width="6" height="6" rx="1.4" stroke="#333" stroke-width=".9"/><rect x="972.8" y="34.8" width="6" height="6" rx="1.4" stroke="#333" stroke-width=".9" fill="#f4f4f4"/>
</svg>
<div class="t" style="left:512px;top:33.6px;font-size:6.9px;color:#333;transform:translateX(-50%);">127.0.0.1</div>
<div id=tb class="a" style=""></div>
<div id=tbsel class="a" style=""></div>
<svg class="a" style="left:32px;top:52px" width="960" height="54" viewBox="32 52 960 54">
<defs>
<linearGradient id="gRes" x1="0" y1="0" x2="1" y2="1"><stop offset="0" stop-color="#9fd0f6"/><stop offset=".6" stop-color="#7fb6e6"/><stop offset="1" stop-color="#3c5e86"/></linearGradient>
<linearGradient id="gSy" x1="0" y1="0" x2="0" y2="1"><stop offset="0" stop-color="#2f3a3c"/><stop offset=".55" stop-color="#3f6a58"/><stop offset="1" stop-color="#4aa37a"/></linearGradient>
</defs>
<!-- home -->
<circle cx="85" cy="75.4" r="11.6" fill="none" stroke="#585c6a" stroke-width=".7"/>
<path d="M85 69.4l-6.6 5.8h1.9v5.6h3.3v-3.6h2.8v3.6h3.3v-5.6h1.9z" fill="#fff"/>
<!-- backup clock -->
<circle cx="151.300" cy="75.400" r="12.300" fill="#373a46" stroke="#f2f3f5" stroke-width="1.100"/>
<g stroke="#c9ccd4" stroke-width=".5"><path d="M151.300 64.800v1.500M151.300 84.500v1.500M140.700 75.400h1.500M160.400 75.400h1.500M146 66.200l.7 1.200M156.600 66.200l-.7 1.200M142.100 70.100l1.200.7M160.500 70.100l-1.200.7M142.100 80.700l1.200-.7M160.500 80.700l-1.200-.7M146 84.600l.7-1.200M156.600 84.600l-.7-1.200"/></g>
<path d="M144.100 76L143.500 70.900L145.300 71.700C147.600 68.200 152.200 66.500 157 68.700L156.600 71.800C152.800 70.300 149.700 71.100 148.100 73.300L149.400 74.300Z" fill="#8b79e6"/>
<path d="M157 68.700L156.600 71.800C155 71.200 153.600 71 152.400 71.100L152.600 67.500C154 67.500 155.600 68 157 68.700Z" fill="#6a5cb8"/>
<path d="M142.600 77.900L150.400 73.600L150.900 71.800L151.700 71.800L152.200 73.600L157.300 79.900L151.300 76.700Z" fill="#fff"/>
<!-- synchronize -->
<radialGradient id="gSyG" cx="199.600" cy="71.300" r="6" gradientUnits="userSpaceOnUse"><stop offset="0" stop-color="#4a8a6c" stop-opacity=".85"/><stop offset="1" stop-color="#3b3f49" stop-opacity="0"/></radialGradient>
<linearGradient id="gSyA" x1="0" y1="75" x2="0" y2="88.600" gradientUnits="userSpaceOnUse"><stop offset="0" stop-color="#56bd8e"/><stop offset=".7" stop-color="#4aa57c"/><stop offset="1" stop-color="#3f7f62"/></linearGradient>
<rect x="192.300" y="63.300" width="15.200" height="20.700" fill="#3b3f49" stroke="#e0e2e6" stroke-width="1"/>
<rect x="193" y="64" width="13.800" height="19.300" fill="url(#gSyG)"/>
<path d="M192.300 84L190.900 88.300L196.400 84M207.500 84L209 88.300L203.500 84" fill="none" stroke="#d8dade" stroke-width=".8" stroke-linejoin="round"/>
<path d="M200 75.200L204.300 79.400H202.400V88.500H197.500V79.400H195.600Z" fill="url(#gSyA)"/>
<path d="M198 70.400h4M198.600 71.700h2.800M199.200 72.900h1.600" stroke="#4a9a76" stroke-width=".5" opacity=".7"/>
<!-- archive -->
<linearGradient id="gDoor" x1="238" y1="0" x2="247" y2="0" gradientUnits="userSpaceOnUse"><stop offset="0" stop-color="#fafafb"/><stop offset=".55" stop-color="#e4e5e9"/><stop offset="1" stop-color="#b4b7c0"/></linearGradient>
<rect x="246.600" y="65.400" width="12.200" height="20.500" fill="#3c4049" stroke="#d4d6dc" stroke-width=".8"/>
<path d="M238 64.600L246.900 62.600V88.500L238 87.900Z" fill="url(#gDoor)"/>
<path d="M239.400 72.600l1-.1v1.800l-1 0zM239.400 76l1 0v1.800l-1-.1z" fill="#8c909c"/>
<path d="M252.300 70.500L256.300 76.500L254 76.300C253.800 80.600 252.600 84.800 250.600 88.500L247.400 88C249.600 84.400 250.800 80.400 251 76.100L248.800 75.900Z" fill="#f0b429"/>
<!-- restore -->
<linearGradient id="gRes2" x1="316" y1="66" x2="331.500" y2="84" gradientUnits="userSpaceOnUse"><stop offset="0" stop-color="#a8d6f9"/><stop offset=".5" stop-color="#8abfe9"/><stop offset=".78" stop-color="#476689"/><stop offset="1" stop-color="#2b2e3a"/></linearGradient>
<path d="M326 65.600A10.400 10.400 0 1 0 331.800 81.400L327.500 78.400A5.200 5.200 0 1 1 326 71.300Z" fill="url(#gRes2)"/>
<path d="M326.300 62.600L333 68.500L325.200 71.700Z" fill="#a4d3f8"/>
<!-- jobs/logs & p5 -->
<rect x="751.6" y="64.6" width="35" height="21.600" rx="1.600" fill="none" stroke="#666a78" stroke-width=".8"/>
<rect x="799.4" y="64.600" width="35.200" height="21.600" rx="1.600" fill="none" stroke="#666a78" stroke-width=".8"/>
<path d="M791 66v18" stroke="#444753" stroke-width=".6"/>
<rect x="758.400" y="70.400" width="14.400" height="11" rx="1" fill="none" stroke="#f2f2f4" stroke-width="1"/>
<path d="M759.800 77.400q1-4.600 2-.6t2.200-.4q1.100-4.400 2.200 0t2.200 0q.9-2.400 1.800-.8l1.200-.4" fill="none" stroke="#f2f2f4" stroke-width=".75" stroke-linejoin="round" stroke-linecap="round"/>
<path d="M778 74.200h5.200l-2.600 3.400z" fill="#fff"/>
<path d="M825.800 74.200h5.200l-2.600 3.400z" fill="#fff"/>
<circle cx="812.300" cy="75.800" r="6.700" fill="none" stroke="#f4f4f6" stroke-width="1"/>
<path d="M846.800 73h3.800l-1.900 2.800zM846.800 82h3.800l-1.900-2.800z" fill="#4f5362"/>
</svg>
<div class="t" style="left:812.3px;top:71.6px;font-size:8.2px;color:#fff;transform:translateX(-50%);font-weight:bold;letter-spacing:-.6px">P5</div>
<div class="tl" style="left:85px;color:#dfe1e6">Home</div>
<div class="tl" style="left:151px;color:#dfe1e6">Backup</div>
<div class="tl" style="left:199.7px;color:#dfe1e6">Synchronize</div>
<div class="tl" style="left:248.4px;color:#dfe1e6">Archive</div>
<div class="tl" style="left:323.4px;color:#f4f5f7">Restore</div>
<div class="tl" style="left:770.3px;color:#b2b6c0">Jobs/Logs</div>
<div class="tl" style="left:817.6px;color:#b2b6c0">P5</div>
<div id=side class="a" style=""></div>
<div id=sidesel class="a" style=""></div>
<div class="sh" style="top:110.6px">RESTORE</div>
<div class="sh" style="top:149.6px">BROWSE</div>
<div class="si" style="top:128.6px">Getting Started</div>
<div class="si" style="top:167.8px">Backup</div>
<div class="si" style="top:186.3px;color:#fff">Archive</div>
<svg class="a" style="left:40px;top:124px" width="24" height="76" viewBox="40 124 24 76">
<circle cx="50.200" cy="133" r="5.200" fill="#fff"/><circle cx="50.200" cy="133" r="2" fill="#4d5263"/>
<g stroke="#4f86d8" stroke-width="2.600"><path d="M46.500 129.300l2 2M53.900 129.300l-2 2M46.500 136.700l2-2M53.900 136.700l-2-2"/></g>
<circle cx="50.200" cy="133" r="1.900" fill="#4d5263"/>
<circle cx="50.200" cy="172.200" r="5" fill="#7fa8e6" stroke="#e8ecf4" stroke-width=".9"/><path d="M50.200 169.600l-2.400 2.600h1.500v1.800h1.800v-1.800h1.500z" fill="#fff" opacity=".9"/>
<path d="M46.800 185.600h7.400v10.400h-7.400z" fill="#e9ebef" stroke="#c6c9d2" stroke-width=".6"/><path d="M48.600 186.800h4.600v8h-4.600z" fill="#5b8fdc"/><path d="M50.900 188.400l1.700 2h-1v3h-1.400v-3h-1z" fill="#fff"/>
<path d="M46 185l1.600-.6v11.800l-1.600-.500z" fill="#b8bcc8"/>
</svg>
<div id=main class="a" style=""></div>
<div id=bar1 class="a" style=""></div>
<div id=bar2 class="a" style=""></div>
<div class="btn" style="left:152.7px;top:107.4px;width:43px"><svg class="a" style="left:1.400px;top:1.500px" width="11.800" height="10.600" viewBox="0 0 10 9" fill="none" stroke="#333" stroke-width=".8"><rect x=".5" y=".6" width="8.600" height="6.400" rx=".4"/><circle cx="3.800" cy="3.700" r="1.800"/><path d="M5.200 5.200l2.400 3" stroke-width="1.100"/></svg><span style="left:16.2px">Search</span></div>
<div class="btn" style="left:201.1px;top:107.4px;width:43.4px"><svg class="a" style="left:1.600px;top:1.700px" width="11.400" height="9.100" viewBox="0 0 10 8" fill="none" stroke="#333" stroke-width=".75"><rect x="5" y="1.700" width="4.500" height="5.600" fill="#d2d2d2" stroke="none"/><rect x=".5" y=".5" width="9" height="6.800" rx=".4"/><path d="M5 .5v6.800M.5 1.700h9" /></svg><span style="left:15.8px">Gallery</span></div>
<div class="btn" style="left:250.4px;top:107.4px;width:56px"><svg class="a" style="left:1.600px;top:1.700px" width="11.800" height="9.400" viewBox="0 0 10 8" fill="none" stroke="#333" stroke-width=".75"><rect x="5" y="4.200" width="4.500" height="3.100" fill="#d2d2d2" stroke="none"/><rect x=".5" y=".5" width="9" height="6.800" rx=".4"/><path d="M5 .5v6.800M.5 1.700h9M5 4.200h4.500"/></svg><span style="left:15.8px">Information</span></div>
<div class="btn" style="left:766.9px;top:107.3px;width:78.6px"><svg class="a" style="left:1.600px;top:2.200px" width="11.600" height="8.400" viewBox="0 0 11 8" fill="none" stroke="#333" stroke-width=".8"><rect x=".5" y=".5" width="10" height="6.600" rx=".6"/><path d="M2.400 2.600h6M2.400 4.800h6M6.600 1.600l2 1-2 1M4.400 3.800l-2 1 2 1" stroke-width=".6"/></svg><span style="left:16.6px">Load media/file list</span></div>
<div class="btn" style="left:856px;top:107.3px;width:89.4px"><svg class="a" style="left:2.600px;top:1.600px" width="10.400" height="9.400" viewBox="0 0 10 9" fill="none" stroke="#333" stroke-width=".8"><rect x=".6" y="1.200" width="8.600" height="7.200" rx="1"/><path d="M.6 3.200h8.600M2.800 .4v1.600M7 .4v1.600" /><path d="M2.400 5h5M2.400 6.800h5" stroke="#999" stroke-width=".5"/></svg><svg class="a" style="left:79.400px;top:4.300px" width="6.400" height="4.300" viewBox="0 0 6 4" fill="none" stroke="#adadad" stroke-width=".8"><path d="M.6.600l2.400 2.400 2.400-2.400"/></svg><span style="left:15.9px">08-Dec-2025 17:29</span></div>
<div class="btn" style="left:950.4px;top:107.3px;width:36.2px"><svg class="a" style="left:2.400px;top:2.200px" width="11.400" height="8.300" viewBox="0 0 11 8" fill="none" stroke="#333" stroke-width=".8"><rect x=".5" y=".5" width="10" height="6.800" rx=".4" fill="#e2e2e2"/><path d="M.5 2.200h10" stroke-width=".8"/><path d="M.5 4h10M.5 5.600h10" stroke="#888" stroke-width=".5"/></svg><span style="left:16.5px">View</span></div>
<div class="a" style="left:851.200px;top:109px;width:.6px;height:10px;background:#d8d8d8"></div>
<div class="btn" style="left:148.8px;top:125.4px;width:12.7px"><svg class="a" style="left:3.400px;top:3.100px" width="5.600" height="6.700" viewBox="0 0 5 6"><path d="M4.400.3v5.400L.4 3z" fill="#2a2a2a"/></svg><span style="left:0px"></span></div>
<div class="btn" style="left:163.4px;top:125.4px;width:38.2px"><svg class="a" style="left:27.800px;top:1.900px" width="5" height="8.600" viewBox="0 0 5 8" fill="none" stroke="#222" stroke-width="1"><path d="M1 .4l2.200 3.600L1 7.600"/></svg><span style="left:1.4px">Desktop</span></div>
<div class="btn" style="left:203.5px;top:125.4px;width:100.2px"><svg class="a" style="left:90px;top:1.900px" width="5" height="8.600" viewBox="0 0 5 8" fill="none" stroke="#222" stroke-width="1"><path d="M1 .4l2.200 3.600L1 7.600"/></svg><span style="left:1.6px">Best Views Archive 2025-12</span></div>
<div id=ghead class="a" style=""></div>
<div class="gh" style="left:146.8px;width:132.8px;background:linear-gradient(#f3f8fe,#dce9fa);border-bottom:.6px solid #c3d4ea;">Name<svg class="a" style="left:25.600px;top:3.600px" width="6" height="9" viewBox="0 0 6 9" fill="none" stroke="#999" stroke-width=".7"><path d="M3 .6v8M.6 3l2.400-2.400 2.400 2.400"/></svg></div>
<div class="gh" style="left:279.6px;width:69.0px;">Archive Date</div>
<div class="gh" style="left:348.6px;width:68.89999999999998px;">Modification Date</div>
<div class="gh" style="left:417.5px;width:46.10000000000002px;">Size</div>
<div class="gh" style="left:463.6px;width:22.69999999999999px;"></div>
<div class="row" style="top:157.60px"><svg width="7.800" height="9.400" viewBox="0 0 7.400 9" fill="none" stroke="#1e1e1e" stroke-width=".85" stroke-linejoin="round"><path d="M.5.500h4l2.400 2.400v5.600h-6.400z"/><path d="M4.500.500v2.400h2.400" stroke-width=".6"/><path d="M1.300 7l1.600-2.500 1.100 1.400.9-1 1.200 2.100z" stroke-width=".55" fill="#c4c4c4"/><path d="M1.600 3.200h1.600" stroke-width=".6"/></svg><span style="left:24.200px">4k Sample2 copy 2.mp4</span><span style="left:138.900px">08-Dec-2025 17:29</span><span style="left:207.900px">08-Sep-2020 16:28</span><span style="left:276.800px">89.01 MiB</span></div>
<div class="row alt" style="top:171.33px"><svg width="7.800" height="9.400" viewBox="0 0 7.400 9" fill="none" stroke="#1e1e1e" stroke-width=".85" stroke-linejoin="round"><path d="M.5.500h4l2.400 2.400v5.600h-6.400z"/><path d="M4.500.500v2.400h2.400" stroke-width=".6"/><path d="M1.300 7l1.600-2.500 1.100 1.400.9-1 1.200 2.100z" stroke-width=".55" fill="#c4c4c4"/><path d="M1.600 3.200h1.600" stroke-width=".6"/></svg><span style="left:24.200px">DSC_0125.JPG</span><span style="left:138.900px">08-Dec-2025 17:29</span><span style="left:207.900px">27-May-2013 14:22</span><span style="left:276.800px">3.80 MiB</span></div>
<div class="row" style="top:185.06px"><svg width="7.800" height="9.400" viewBox="0 0 7.400 9" fill="none" stroke="#1e1e1e" stroke-width=".85" stroke-linejoin="round"><path d="M.5.500h4l2.400 2.400v5.600h-6.400z"/><path d="M4.500.500v2.400h2.400" stroke-width=".6"/><path d="M1.300 7l1.600-2.500 1.100 1.400.9-1 1.200 2.100z" stroke-width=".55" fill="#c4c4c4"/><path d="M1.600 3.200h1.600" stroke-width=".6"/></svg><span style="left:24.200px">DSC_0555.JPG</span><span style="left:138.900px">08-Dec-2025 17:29</span><span style="left:207.900px">03-Apr-2013 23:17</span><span style="left:276.800px">5.96 MiB</span></div>
<div class="row alt" style="top:198.79px"><svg width="7.800" height="9.400" viewBox="0 0 7.400 9" fill="none" stroke="#1e1e1e" stroke-width=".85" stroke-linejoin="round"><path d="M.5.500h4l2.400 2.400v5.600h-6.400z"/><path d="M4.500.500v2.400h2.400" stroke-width=".6"/><path d="M1.300 7l1.600-2.500 1.100 1.400.9-1 1.200 2.100z" stroke-width=".55" fill="#c4c4c4"/><path d="M1.600 3.200h1.600" stroke-width=".6"/></svg><span style="left:24.200px">DSC_0804.JPG</span><span style="left:138.900px">08-Dec-2025 17:29</span><span style="left:207.900px">17-Apr-2013 05:33</span><span style="left:276.800px">10.59 MiB</span></div>
<div class="row" style="top:212.52px"><svg width="7.800" height="9.400" viewBox="0 0 7.400 9" fill="none" stroke="#1e1e1e" stroke-width=".85" stroke-linejoin="round"><path d="M.5.500h4l2.400 2.400v5.600h-6.400z"/><path d="M4.500.500v2.400h2.400" stroke-width=".6"/><path d="M1.300 7l1.600-2.500 1.100 1.400.9-1 1.200 2.100z" stroke-width=".55" fill="#c4c4c4"/><path d="M1.600 3.200h1.600" stroke-width=".6"/></svg><span style="left:24.200px">DSC_2527.JPG</span><span style="left:138.900px">08-Dec-2025 17:29</span><span style="left:207.900px">06-May-2013 15:04</span><span style="left:276.800px">9.66 MiB</span></div>
<div class="row alt" style="top:226.25px"><svg width="7.800" height="9.400" viewBox="0 0 7.400 9" fill="none" stroke="#1e1e1e" stroke-width=".85" stroke-linejoin="round"><path d="M.5.500h4l2.400 2.400v5.600h-6.400z"/><path d="M4.500.500v2.400h2.400" stroke-width=".6"/><path d="M1.300 7l1.600-2.500 1.100 1.400.9-1 1.200 2.100z" stroke-width=".55" fill="#c4c4c4"/><path d="M1.600 3.200h1.600" stroke-width=".6"/></svg><span style="left:24.200px">P1010130.JPG</span><span style="left:138.900px">08-Dec-2025 17:29</span><span style="left:207.900px">03-Oct-2017 19:47</span><span style="left:276.800px">3.66 MiB</span></div>
<div class="row" style="top:239.98px"><svg width="7.800" height="9.400" viewBox="0 0 7.400 9" fill="none" stroke="#1e1e1e" stroke-width=".85" stroke-linejoin="round"><path d="M.5.500h4l2.400 2.400v5.600h-6.400z"/><path d="M4.500.500v2.400h2.400" stroke-width=".6"/><path d="M1.300 7l1.600-2.500 1.100 1.400.9-1 1.200 2.100z" stroke-width=".55" fill="#c4c4c4"/><path d="M1.600 3.200h1.600" stroke-width=".6"/></svg><span style="left:24.200px">P1020139.JPG</span><span style="left:138.900px">08-Dec-2025 17:29</span><span style="left:207.900px">13-Oct-2017 13:00</span><span style="left:276.800px">4.34 MiB</span></div>
<div class="row alt sel" style="top:253.71px"><svg width="7.800" height="9.400" viewBox="0 0 7.400 9" fill="none" stroke="#1e1e1e" stroke-width=".85" stroke-linejoin="round"><path d="M.5.500h4l2.400 2.400v5.600h-6.400z"/><path d="M4.500.500v2.400h2.400" stroke-width=".6"/><path d="M1.300 7l1.600-2.500 1.100 1.400.9-1 1.200 2.100z" stroke-width=".55" fill="#c4c4c4"/><path d="M1.600 3.200h1.600" stroke-width=".6"/></svg><span style="left:24.200px">P1080143.JPG</span><span style="left:138.900px">08-Dec-2025 17:29</span><span style="left:207.900px">27-May-2013 14:34</span><span style="left:276.800px">3.60 MiB</span></div>
<div class="row" style="top:267.44px"><svg width="7.800" height="9.400" viewBox="0 0 7.400 9" fill="none" stroke="#1e1e1e" stroke-width=".85" stroke-linejoin="round"><path d="M.5.500h4l2.400 2.400v5.600h-6.400z"/><path d="M4.500.500v2.400h2.400" stroke-width=".6"/><path d="M1.300 7l1.600-2.500 1.100 1.400.9-1 1.200 2.100z" stroke-width=".55" fill="#c4c4c4"/><path d="M1.600 3.200h1.600" stroke-width=".6"/></svg><span style="left:24.200px">P1080919_DxO copy.jpg</span><span style="left:138.900px">08-Dec-2025 17:29</span><span style="left:207.900px">19-Oct-2019 03:52</span><span style="left:276.800px">3.51 MiB</span></div>
<div class="row alt" style="top:281.17px"><svg width="7.800" height="9.400" viewBox="0 0 7.400 9" fill="none" stroke="#1e1e1e" stroke-width=".85" stroke-linejoin="round"><path d="M.5.500h4l2.400 2.400v5.600h-6.400z"/><path d="M4.500.500v2.400h2.400" stroke-width=".6"/><path d="M1.300 7l1.600-2.500 1.100 1.400.9-1 1.200 2.100z" stroke-width=".55" fill="#c4c4c4"/><path d="M1.600 3.200h1.600" stroke-width=".6"/></svg><span style="left:24.200px">P1080919_DxO.jpg</span><span style="left:138.900px">08-Dec-2025 17:29</span><span style="left:207.900px">19-Oct-2019 03:52</span><span style="left:276.800px">3.51 MiB</span></div>
<div class="row" style="top:294.90px"><svg width="7.800" height="9.400" viewBox="0 0 7.400 9" fill="none" stroke="#1e1e1e" stroke-width=".85" stroke-linejoin="round"><path d="M.5.500h4l2.400 2.400v5.600h-6.400z"/><path d="M4.500.500v2.400h2.400" stroke-width=".6"/><path d="M1.300 7l1.600-2.500 1.100 1.400.9-1 1.200 2.100z" stroke-width=".55" fill="#c4c4c4"/><path d="M1.600 3.200h1.600" stroke-width=".6"/></svg><span style="left:24.200px">P1080955_DxO.jpg</span><span style="left:138.900px">08-Dec-2025 17:29</span><span style="left:207.900px">20-Nov-2019 11:18</span><span style="left:276.800px">3.19 MiB</span></div>
<div class="row alt" style="top:308.63px"><svg width="7.800" height="9.400" viewBox="0 0 7.400 9" fill="none" stroke="#1e1e1e" stroke-width=".85" stroke-linejoin="round"><path d="M.5.500h4l2.400 2.400v5.600h-6.400z"/><path d="M4.500.500v2.400h2.400" stroke-width=".6"/><path d="M1.300 7l1.600-2.500 1.100 1.400.9-1 1.200 2.100z" stroke-width=".55" fill="#c4c4c4"/><path d="M1.600 3.200h1.600" stroke-width=".6"/></svg><span style="left:24.200px">P1090319 - Version 2.JPG</span><span style="left:138.900px">08-Dec-2025 17:29</span><span style="left:207.900px">27-May-2013 14:32</span><span style="left:276.800px">4.10 MiB</span></div>
<div class="row" style="top:322.36px"><svg width="7.800" height="9.400" viewBox="0 0 7.400 9" fill="none" stroke="#1e1e1e" stroke-width=".85" stroke-linejoin="round"><path d="M.5.500h4l2.400 2.400v5.600h-6.400z"/><path d="M4.500.500v2.400h2.400" stroke-width=".6"/><path d="M1.300 7l1.600-2.500 1.100 1.400.9-1 1.200 2.100z" stroke-width=".55" fill="#c4c4c4"/><path d="M1.600 3.200h1.600" stroke-width=".6"/></svg><span style="left:24.200px">P1100592 copy.JPG</span><span style="left:138.900px">08-Dec-2025 17:29</span><span style="left:207.900px">27-May-2013 14:27</span><span style="left:276.800px">3.86 MiB</span></div>
<div class="row alt" style="top:336.09px"><svg width="7.800" height="9.400" viewBox="0 0 7.400 9" fill="none" stroke="#1e1e1e" stroke-width=".85" stroke-linejoin="round"><path d="M.5.500h4l2.400 2.400v5.600h-6.400z"/><path d="M4.500.500v2.400h2.400" stroke-width=".6"/><path d="M1.300 7l1.600-2.500 1.100 1.400.9-1 1.200 2.100z" stroke-width=".55" fill="#c4c4c4"/><path d="M1.600 3.200h1.600" stroke-width=".6"/></svg><span style="left:24.200px">P1100592.JPG</span><span style="left:138.900px">08-Dec-2025 17:29</span><span style="left:207.900px">27-May-2013 14:27</span><span style="left:276.800px">3.86 MiB</span></div>
<div class="row" style="top:349.82px"><svg width="7.800" height="9.400" viewBox="0 0 7.400 9" fill="none" stroke="#1e1e1e" stroke-width=".85" stroke-linejoin="round"><path d="M.5.500h4l2.400 2.400v5.600h-6.400z"/><path d="M4.500.500v2.400h2.400" stroke-width=".6"/><path d="M1.300 7l1.600-2.500 1.100 1.400.9-1 1.200 2.100z" stroke-width=".55" fill="#c4c4c4"/><path d="M1.600 3.200h1.600" stroke-width=".6"/></svg><span style="left:24.200px">P1110060.JPG</span><span style="left:138.900px">08-Dec-2025 17:29</span><span style="left:207.900px">27-May-2013 14:18</span><span style="left:276.800px">6.13 MiB</span></div>
<div class="row alt" style="top:363.55px"><svg width="7.800" height="9.400" viewBox="0 0 7.400 9" fill="none" stroke="#1e1e1e" stroke-width=".85" stroke-linejoin="round"><path d="M.5.500h4l2.400 2.400v5.600h-6.400z"/><path d="M4.500.500v2.400h2.400" stroke-width=".6"/><path d="M1.300 7l1.600-2.500 1.100 1.400.9-1 1.200 2.100z" stroke-width=".55" fill="#c4c4c4"/><path d="M1.600 3.200h1.600" stroke-width=".6"/></svg><span style="left:24.200px">SDC15060 copy.JPG</span><span style="left:138.900px">08-Dec-2025 17:29</span><span style="left:207.900px">23-Aug-2009 09:12</span><span style="left:276.800px">3.56 MiB</span></div>
<div class="row" style="top:377.28px"><svg width="7.800" height="9.400" viewBox="0 0 7.400 9" fill="none" stroke="#1e1e1e" stroke-width=".85" stroke-linejoin="round"><path d="M.5.500h4l2.400 2.400v5.600h-6.400z"/><path d="M4.500.500v2.400h2.400" stroke-width=".6"/><path d="M1.300 7l1.600-2.500 1.100 1.400.9-1 1.200 2.100z" stroke-width=".55" fill="#c4c4c4"/><path d="M1.600 3.200h1.600" stroke-width=".6"/></svg><span style="left:24.200px">SDC15060.JPG</span><span style="left:138.900px">08-Dec-2025 17:29</span><span style="left:207.900px">23-Aug-2009 09:12</span><span style="left:276.800px">3.56 MiB</span></div>
<div class="row alt" style="top:391.01px"><svg width="7.800" height="9.400" viewBox="0 0 7.400 9" fill="none" stroke="#1e1e1e" stroke-width=".85" stroke-linejoin="round"><path d="M.5.500h4l2.400 2.400v5.600h-6.400z"/><path d="M4.500.500v2.400h2.400" stroke-width=".6"/><path d="M1.300 7l1.600-2.500 1.100 1.400.9-1 1.200 2.100z" stroke-width=".55" fill="#c4c4c4"/><path d="M1.600 3.200h1.600" stroke-width=".6"/></svg><span style="left:24.200px">SDC15105.JPG</span><span style="left:138.900px">08-Dec-2025 17:29</span><span style="left:207.900px">23-Aug-2009 09:26</span><span style="left:276.800px">3.58 MiB</span></div>
<div class="row" style="top:404.74px"><svg width="7.800" height="9.400" viewBox="0 0 7.400 9" fill="none" stroke="#1e1e1e" stroke-width=".85" stroke-linejoin="round"><path d="M.5.500h4l2.400 2.400v5.600h-6.400z"/><path d="M4.500.500v2.400h2.400" stroke-width=".6"/><path d="M1.300 7l1.600-2.500 1.100 1.400.9-1 1.200 2.100z" stroke-width=".55" fill="#c4c4c4"/><path d="M1.600 3.200h1.600" stroke-width=".6"/></svg><span style="left:24.200px">SDC15304 copy.JPG</span><span style="left:138.900px">08-Dec-2025 17:29</span><span style="left:207.900px">27-May-2013 14:36</span><span style="left:276.800px">3.25 MiB</span></div>
<div class="row alt" style="top:418.47px"><svg width="7.800" height="9.400" viewBox="0 0 7.400 9" fill="none" stroke="#1e1e1e" stroke-width=".85" stroke-linejoin="round"><path d="M.5.500h4l2.400 2.400v5.600h-6.400z"/><path d="M4.500.500v2.400h2.400" stroke-width=".6"/><path d="M1.300 7l1.600-2.500 1.100 1.400.9-1 1.200 2.100z" stroke-width=".55" fill="#c4c4c4"/><path d="M1.600 3.200h1.600" stroke-width=".6"/></svg><span style="left:24.200px">SDC15304.JPG</span><span style="left:138.900px">08-Dec-2025 17:29</span><span style="left:207.900px">27-May-2013 14:36</span><span style="left:276.800px">3.25 MiB</span></div>
<div class="a" style="left:146.800px;top:432.300px;width:345.200px;height:21.200px;background:#fff"></div>
<div class="a" style="left:146.800px;top:436px;width:345.200px;height:17.500px;background:linear-gradient(#f9f9f9,#f3f3f3);border-top:.8px solid #d2d2d2"></div>
<div class="btn" style="left:146.4px;top:438.5px;width:226px"><span style="left:5.6px">/Users/archiware/Desktop/Best Views Archive 2025-12/P1080143.JPG</span></div>
<div class="a" style="left:146.800px;top:453.500px;width:345.200px;height:18.100px;background:linear-gradient(#fdfdfd,#f3f3f3);border-top:.6px solid #d6d6d6"></div>
<svg class="a" style="left:146.800px;top:453.500px" width="345" height="18" viewBox="146.800 453.500 345 18" fill="none" stroke="#c9c9c9" stroke-width=".9" stroke-linecap="round" stroke-linejoin="round">
<path d="M153.600 458.400l-3.400 4.200 3.400 4.200M157.200 458.400l-3.400 4.200 3.400 4.200"/>
<rect x="166" y="456.200" width="12.800" height="12.800" rx="1" stroke="#e4e4e4" stroke-width=".6"/><path d="M173.800 458.400l-3.400 4.200 3.400 4.200"/>
<path d="M183.700 457.500v10M235 457.500v10M257.300 457.500v10M281.700 457.500v10" stroke="#dcdcdc" stroke-width=".6"/>
<rect x="239" y="456.200" width="12.800" height="12.800" rx="1" stroke="#e4e4e4" stroke-width=".6"/><path d="M243.800 458.400l3.400 4.200-3.400 4.200"/>
<rect x="262.600" y="455.800" width="14.400" height="13.600" rx="1.400" stroke="#c8c8c8" stroke-width=".7" fill="#f4f4f4"/>
<path d="M273.200 460.200a3.900 3.900 0 1 0 .6 3.400M273.600 458v2.600h-2.600" stroke="#b0b0b0" stroke-width="1"/>
</svg>
<div class="t" style="left:190.8px;top:459.2px;font-size:6.87px;color:#222;">Page</div>
<div class="a" style="left:215.700px;top:455.600px;width:17px;height:14px;border:.6px solid #d2d2d2;background:#fff;border-radius:1px"></div>
<div class="t" style="left:219.8px;top:459.4px;font-size:6.3px;color:#222;">1</div>
<div class="t" style="left:288.6px;top:459.2px;font-size:6.87px;color:#222;">Items per page: 200</div>
<div class="t" style="left:484.2px;top:459.2px;font-size:6.87px;color:#222;transform:translateX(-100%);">Displaying 1 - 20</div>
<div class="splitv" style="left:492px;top:140.500px;width:4.200px;height:331.100px;background:#d4d4d4"></div>
<div class="a" style="left:496.200px;top:140.500px;width:271.600px;height:312.800px;background:#fff;overflow:hidden"></div>
<div class="a" style="left:496.200px;top:140.800px;width:271.600px;height:312.500px;overflow:hidden"><div class="a" style="left:-496.200px;top:-140.800px;width:1024px;height:544px">
<div class="thumb" style="left:498.4px;top:59.4px"></div>
<div class="thumb" style="left:586.5px;top:59.4px"></div>
<div class="thumb" style="left:674.6px;top:59.4px"></div>
<div class="thumb" style="left:498.4px;top:154.6px"></div>
<div class="gl" style="left:540.1px;top:158.4px">DSC_0804.JPG</div>
<div class="thumb" style="left:586.5px;top:154.6px"></div>
<div class="gl" style="left:628.2px;top:158.4px">DSC_2527.JPG</div>
<div class="thumb" style="left:674.6px;top:154.6px"></div>
<div class="gl" style="left:716.3000000000001px;top:158.4px">P1010130.JPG</div>
<div class="thumb" style="left:498.4px;top:249.8px"></div>
<div class="gl" style="left:540.1px;top:253.60000000000002px">P1020139.JPG</div>
<div class="thumb sel" style="left:586.5px;top:249.8px"></div>
<div class="gl" style="left:628.2px;top:253.60000000000002px">P1080143.JPG</div>
<div class="thumb" style="left:674.6px;top:249.8px"></div>
<div class="gl" style="left:716.3000000000001px;top:253.60000000000002px">P1080919_DxO copy.jpg</div>
<div class="thumb" style="left:498.4px;top:345.1px"></div>
<div class="gl" style="left:540.1px;top:348.90000000000003px">P1080919_DxO.jpg</div>
<div class="thumb" style="left:586.5px;top:345.1px"></div>
<div class="gl" style="left:628.2px;top:348.90000000000003px">P1080955_DxO.jpg</div>
<div class="thumb" style="left:674.6px;top:345.1px"></div>
<div class="gl" style="left:716.3000000000001px;top:348.90000000000003px">P1090319 - Version 2.JPG</div>
<div class="thumb" style="left:498.4px;top:440.4px"></div>
<div class="gl" style="left:540.1px;top:444.2px">P1100592 copy.JPG</div>
<div class="thumb" style="left:586.5px;top:440.4px"></div>
<div class="gl" style="left:628.2px;top:444.2px">P1100592.JPG</div>
<div class="thumb" style="left:674.6px;top:440.4px"></div>
<div class="gl" style="left:716.3000000000001px;top:444.2px">P1110060.JPG</div>
<svg class="a" style="left:503px;top:180.5px" width="73.6" height="48.4"><use href="#pPalms" width="73.6" height="48.4"/></svg>
<svg class="a" style="left:591.3px;top:180.5px" width="73.6" height="48.4"><use href="#pBeach" width="73.6" height="48.4"/></svg>
<svg class="a" style="left:679.7px;top:177.3px" width="73.6" height="55"><use href="#pMoon" width="73.6" height="55"/></svg>
<svg class="a" style="left:503px;top:272.6px" width="73.6" height="54.8"><use href="#pDusk" width="73.6" height="54.8"/></svg>
<svg class="a" style="left:600.7px;top:263.2px" width="55.1" height="73.6"><use href="#pEiffel" width="55.1" height="73.6"/></svg>
<svg class="a" style="left:679.7px;top:272.8px" width="73.6" height="54.6"><use href="#pNYC" width="73.6" height="54.6"/></svg>
<svg class="a" style="left:503px;top:368.1px" width="73.6" height="54.6"><use href="#pNYC" width="73.6" height="54.6"/></svg>
<svg class="a" style="left:600.7px;top:358.9px" width="55.1" height="72.9"><use href="#pBridge" width="55.1" height="72.9"/></svg>
<svg class="a" style="left:679.7px;top:368.1px" width="73.6" height="54.6"><use href="#pSing" width="73.6" height="54.6"/></svg>
</div></div>
<div class="a" style="left:762px;top:142px;width:3.400px;height:309px;border-radius:2px;background:#f3f3f3"></div>
<div class="a" style="left:762px;top:181.800px;width:3.400px;height:142.800px;border-radius:1.700px;background:#6c6c6c"></div>
<div class="a" style="left:496.200px;top:453.300px;width:271.600px;height:18.300px;background:linear-gradient(#fcfcfc,#f2f2f2);border-top:.6px solid #d6d6d6"></div>
<div class="t" style="left:497.8px;top:459.2px;font-size:6.87px;color:#222;">Preview size:</div>
<div class="a" style="left:545.300px;top:460.200px;width:57.600px;height:5.400px;border-radius:2.700px;background:#f1f1f1;border:.7px solid #cdcdcd"></div>
<div class="a" style="left:561.700px;top:458.600px;width:8.600px;height:8.600px;border-radius:50%;background:#fcfcfc;border:.7px solid #b8b8b8"></div>
<div class="a" style="left:564.700px;top:461.600px;width:2.600px;height:2.600px;border-radius:50%;background:#333"></div>
<div class="splitv" style="left:767.800px;top:140.500px;width:3.800px;height:331.100px;background:#cfcfcf"></div>
<div class="a" style="left:771.600px;top:140.500px;width:220.400px;height:195px;background:#fff"></div>
<div class="a" style="left:774px;top:143px;width:191.400px;height:160.600px;border:.6px solid #dedede;background:#fff"></div>
<div class="t" style="left:870.6px;top:147.2px;font-size:6px;color:#444;transform:translateX(-50%);letter-spacing:.08px">P1080143.JPG</div>
<svg class="a" style="left:815.9px;top:155.2px" width="110" height="146.7"><use href="#pEiffel" width="110" height="146.7"/></svg>
<div class="a" style="left:771.600px;top:335.300px;width:220.400px;height:3.600px;background:#cdcdcd"></div>
<div class="a" style="left:867px;top:335.900px;width:28px;height:2.300px;background:#dedede;border-radius:1px"></div>
<div class="fl" style="top:345.50px">Description:</div><div class="fi" style="top:342.40px">Eiffel Tower</div>
<div class="fl" style="top:360.57px">Location:</div><div class="fi" style="top:357.47px">Paris</div>
<div class="fl" style="top:375.64px">Camera:</div><div class="fi" style="top:372.54px">NIKON Z6</div>
<div class="fl" style="top:390.71px">Resolution:</div><div class="fi" style="top:387.61px">6000 x 4000</div>
<div class="a" style="left:771.600px;top:450.400px;width:220.400px;height:21.200px;background:linear-gradient(#f0f0f0,#e2e2e2)"></div>
<div class="dbtn" style="left:945.200px;top:453.900px;width:43.400px;height:13.600px;font-size:6.900px;line-height:11.800px;border:.9px solid #a3a7b5;border-radius:2px;box-shadow:inset 0 0 0 .6px #2e313c">Apply</div>
<div class="a" style="left:146.800px;top:471.600px;width:845.200px;height:30px;background:linear-gradient(#fff,#f1f1f1);border-top:.6px solid #d9d9d9"></div>
<div class="dbtn" style="left:154.5px;top:477.600px;width:53.3px;height:18.100px;line-height:18px">Restore To</div>
<div class="dbtn" style="left:213.1px;top:477.600px;width:100.3px;height:18.100px;line-height:18px">Add to restore selection</div>
<div class="dbtn" style="left:324.1px;top:477.600px;width:38.9px;height:18.100px;line-height:18px">Details</div>
<div class="dbtn" style="left:945px;top:477.600px;width:34.3px;height:18.100px;line-height:18px">Verify</div>
</div></div>
</body></html>
